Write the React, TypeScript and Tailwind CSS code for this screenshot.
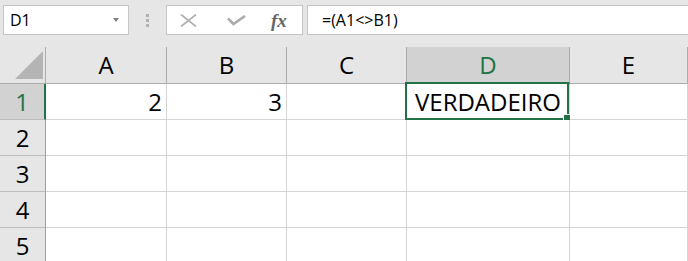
const cols = [
  { key: 'A', w: 'w-[121px]' },
  { key: 'B', w: 'w-[120px]' },
  { key: 'C', w: 'w-[120px]' },
  { key: 'D', w: 'w-[163px]' },
  { key: 'E', w: 'flex-1' },
]

const data: Record<string, string> = { A1: '2', B1: '3', D1: 'VERDADEIRO' }

const selected = { col: 'D', row: 1 }

export default function App() {
  return (
    <div
      className="w-[688px] h-[261px] overflow-hidden bg-[#e6e6e6] text-black"
      style={{ fontFamily: '"Open Sans", "Noto Sans", sans-serif' }}
    >
      {/* formula bar */}
      <div className="flex items-start h-[47px] pt-[5px] pl-[3px]">
        <div className="flex items-center justify-between w-[126px] h-[30px] bg-white border border-[#c6c6c6] pl-[6px] pr-[9px] text-[16px]">
          <span>D1</span>
          <span className="w-0 h-0 border-l-[3.5px] border-r-[3.5px] border-t-[4px] border-l-transparent border-r-transparent border-t-[#808080]" />
        </div>
        <div className="flex flex-col items-center justify-center gap-[2px] w-[37px] h-[30px]">
          <span className="w-[3px] h-[3px] bg-[#b1b1b1]" />
          <span className="w-[3px] h-[3px] bg-[#b1b1b1]" />
          <span className="w-[3px] h-[3px] bg-[#b1b1b1]" />
        </div>
        <div className="flex items-center w-[137px] h-[30px] bg-white border border-[#c6c6c6]">
          {/* cancel */}
          <svg className="ml-[13px]" width="17" height="13" viewBox="0 0 17 13">
            <path d="M1 0.5 L16 12.5 M16 0.5 L1 12.5" stroke="#b0b0b0" strokeWidth="1.7" fill="none" />
          </svg>
          {/* enter */}
          <svg className="ml-[30px]" width="19" height="11" viewBox="0 0 19 11">
            <path d="M1 3.5 L6.5 9 L18 1" stroke="#acacac" strokeWidth="2.6" fill="none" />
          </svg>
          <span
            className="ml-[25px] italic font-bold text-[19px] text-[#666666] leading-none"
            style={{ fontFamily: '"Liberation Serif", serif' }}
          >
            fx
          </span>
        </div>
        <div className="flex items-center flex-1 h-[30px] ml-[4px] -mr-[4px] bg-white border border-[#c6c6c6] pl-[14px] text-[16px]">
          =(A1&lt;&gt;B1)
        </div>
      </div>

      {/* column headers */}
      <div className="flex h-[37px]">
        <div className="relative w-[46px] shrink-0 border-r border-b border-[#ababab]">
          <svg className="absolute left-[15px] top-[4px]" width="29" height="29" viewBox="0 0 29 29">
            <polygon points="28,0 28,28 0,28" fill="#b4b4b4" />
          </svg>
        </div>
        {cols.map((c) => {
          const sel = c.key === selected.col
          return (
            <div
              key={c.key}
              className={`${c.w} shrink-0 flex items-center justify-center text-[24px] border-r border-[#ababab] ${
                sel
                  ? 'bg-[#d2d2d2] text-[#217346] border-b-2 border-b-[#217346]'
                  : 'border-b border-b-[#ababab]'
              }`}
            >
              {c.key}
            </div>
          )
        })}
      </div>

      {/* rows */}
      {[1, 2, 3, 4, 5].map((r) => {
        const selRow = r === selected.row
        return (
          <div key={r} className="flex h-[36px]">
            <div
              className={`w-[46px] shrink-0 flex items-center justify-center text-[24px] border-b border-b-[#bdbdbd] ${
                selRow
                  ? 'bg-[#d2d2d2] text-[#217346] border-r-2 border-r-[#217346]'
                  : 'border-r border-r-[#9e9e9e]'
              }`}
            >
              {r}
            </div>
            {cols.map((c) => {
              const v = data[`${c.key}${r}`]
              const isSel = selRow && c.key === selected.col
              const isText = v !== undefined && isNaN(Number(v))
              return (
                <div
                  key={c.key}
                  className={`relative ${c.w} shrink-0 flex items-center bg-white border-r border-b border-[#d4d4d4] text-[24px] ${
                    isText ? 'justify-center' : 'justify-end pr-[4px]'
                  }`}
                >
                  {v}
                  {isSel && (
                    <div className="absolute -left-[2px] -top-[2px] right-0 -bottom-[1px] border-2 border-[#217346]">
                      <div className="absolute -right-[4px] -bottom-[4px] w-[6px] h-[6px] bg-[#217346] border border-white box-content" />
                    </div>
                  )}
                </div>
              )
            })}
          </div>
        )
      })}
    </div>
  )
}
